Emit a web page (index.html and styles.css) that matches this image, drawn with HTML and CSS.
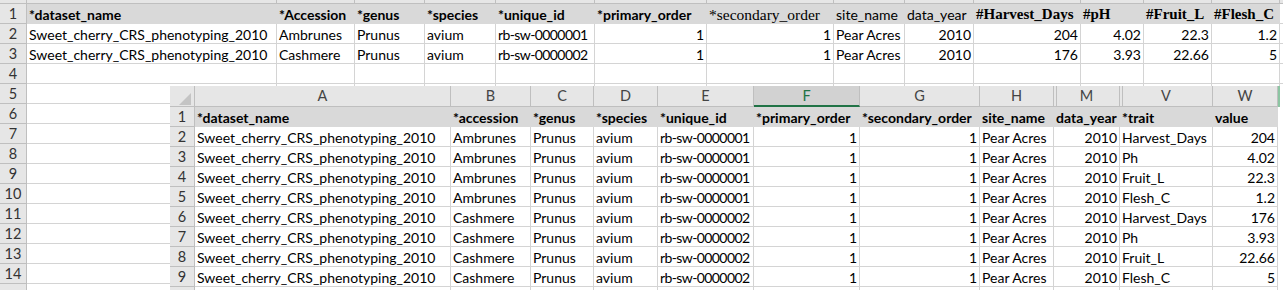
FILE: index.html
```html
<!DOCTYPE html>
<html>
<head>
<meta charset="utf-8">
<link rel="stylesheet" href="styles.css">
</head>
<body>
<div class="screen">
  <div class="sheet">
    <div class="grid top-grid">
      <div class="ch"></div><div class="ch"></div><div class="ch"></div><div class="ch"></div><div class="ch"></div><div class="ch"></div><div class="ch"></div><div class="ch"></div><div class="ch"></div><div class="ch"></div><div class="ch"></div><div class="ch"></div><div class="ch"></div><div class="ch"></div><div class="ch"></div>

      <div class="rh">1</div><div class="c hd">*dataset_name</div><div class="c hd">*Accession</div><div class="c hd">*genus</div><div class="c hd">*species</div><div class="c hd">*unique_id</div><div class="c hd">*primary_order</div><div class="c hd serif-reg">*secondary_order</div><div class="c hd reg">site_name</div><div class="c hd reg">data_year</div><div class="c hd serif">#Harvest_Days</div><div class="c hd serif">#pH</div><div class="c hd serif">#Fruit_L</div><div class="c hd serif">#Flesh_C</div><div class="c"></div>

      <div class="rh">2</div><div class="c">Sweet_cherry_CRS_phenotyping_2010</div><div class="c">Ambrunes</div><div class="c">Prunus</div><div class="c">avium</div><div class="c id">rb-sw-0000001</div><div class="c num">1</div><div class="c num">1</div><div class="c">Pear Acres</div><div class="c num">2010</div><div class="c num">204</div><div class="c num">4.02</div><div class="c num">22.3</div><div class="c num">1.2</div><div class="c"></div>

      <div class="rh">3</div><div class="c">Sweet_cherry_CRS_phenotyping_2010</div><div class="c">Cashmere</div><div class="c">Prunus</div><div class="c">avium</div><div class="c id">rb-sw-0000002</div><div class="c num">1</div><div class="c num">1</div><div class="c">Pear Acres</div><div class="c num">2010</div><div class="c num">176</div><div class="c num">3.93</div><div class="c num">22.66</div><div class="c num">5</div><div class="c"></div>

      <div class="rh">4</div><div class="c"></div><div class="c"></div><div class="c"></div><div class="c"></div><div class="c"></div><div class="c"></div><div class="c"></div><div class="c"></div><div class="c"></div><div class="c"></div><div class="c"></div><div class="c"></div><div class="c"></div><div class="c"></div>
      <div class="rh">5</div><div class="c"></div><div class="c"></div><div class="c"></div><div class="c"></div><div class="c"></div><div class="c"></div><div class="c"></div><div class="c"></div><div class="c"></div><div class="c"></div><div class="c"></div><div class="c"></div><div class="c"></div><div class="c"></div>
      <div class="rh">6</div><div class="c"></div><div class="c"></div><div class="c"></div><div class="c"></div><div class="c"></div><div class="c"></div><div class="c"></div><div class="c"></div><div class="c"></div><div class="c"></div><div class="c"></div><div class="c"></div><div class="c"></div><div class="c"></div>
      <div class="rh">7</div><div class="c"></div><div class="c"></div><div class="c"></div><div class="c"></div><div class="c"></div><div class="c"></div><div class="c"></div><div class="c"></div><div class="c"></div><div class="c"></div><div class="c"></div><div class="c"></div><div class="c"></div><div class="c"></div>
      <div class="rh">8</div><div class="c"></div><div class="c"></div><div class="c"></div><div class="c"></div><div class="c"></div><div class="c"></div><div class="c"></div><div class="c"></div><div class="c"></div><div class="c"></div><div class="c"></div><div class="c"></div><div class="c"></div><div class="c"></div>
      <div class="rh">9</div><div class="c"></div><div class="c"></div><div class="c"></div><div class="c"></div><div class="c"></div><div class="c"></div><div class="c"></div><div class="c"></div><div class="c"></div><div class="c"></div><div class="c"></div><div class="c"></div><div class="c"></div><div class="c"></div>
      <div class="rh">10</div><div class="c"></div><div class="c"></div><div class="c"></div><div class="c"></div><div class="c"></div><div class="c"></div><div class="c"></div><div class="c"></div><div class="c"></div><div class="c"></div><div class="c"></div><div class="c"></div><div class="c"></div><div class="c"></div>
      <div class="rh">11</div><div class="c"></div><div class="c"></div><div class="c"></div><div class="c"></div><div class="c"></div><div class="c"></div><div class="c"></div><div class="c"></div><div class="c"></div><div class="c"></div><div class="c"></div><div class="c"></div><div class="c"></div><div class="c"></div>
      <div class="rh">12</div><div class="c"></div><div class="c"></div><div class="c"></div><div class="c"></div><div class="c"></div><div class="c"></div><div class="c"></div><div class="c"></div><div class="c"></div><div class="c"></div><div class="c"></div><div class="c"></div><div class="c"></div><div class="c"></div>
      <div class="rh">13</div><div class="c"></div><div class="c"></div><div class="c"></div><div class="c"></div><div class="c"></div><div class="c"></div><div class="c"></div><div class="c"></div><div class="c"></div><div class="c"></div><div class="c"></div><div class="c"></div><div class="c"></div><div class="c"></div>
      <div class="rh">14</div><div class="c"></div><div class="c"></div><div class="c"></div><div class="c"></div><div class="c"></div><div class="c"></div><div class="c"></div><div class="c"></div><div class="c"></div><div class="c"></div><div class="c"></div><div class="c"></div><div class="c"></div><div class="c"></div>
      <div class="rh"></div><div class="c"></div><div class="c"></div><div class="c"></div><div class="c"></div><div class="c"></div><div class="c"></div><div class="c"></div><div class="c"></div><div class="c"></div><div class="c"></div><div class="c"></div><div class="c"></div><div class="c"></div><div class="c"></div>
    </div>
  </div>

  <div class="overlay">
    <div class="grid ov-grid">
      <div class="ch corner"><svg width="24" height="20" viewBox="0 0 24 20"><polygon points="9,19 21,7 21,19" fill="#c4c4c4"/></svg></div>
      <div class="ch">A</div><div class="ch">B</div><div class="ch">C</div><div class="ch">D</div><div class="ch">E</div><div class="ch sel">F</div><div class="ch">G</div><div class="ch">H</div><div class="ch hidden-before">M</div><div class="ch hidden-before">V</div><div class="ch">W</div><div class="ch-end"></div>

      <div class="rh">1</div><div class="c hd">*dataset_name</div><div class="c hd">*accession</div><div class="c hd">*genus</div><div class="c hd">*species</div><div class="c hd">*unique_id</div><div class="c hd">*primary_order</div><div class="c hd">*secondary_order</div><div class="c hd">site_name</div><div class="c hd">data_year</div><div class="c hd">*trait</div><div class="c hd">value</div><div class="c blank"></div>

      <div class="rh">2</div><div class="c">Sweet_cherry_CRS_phenotyping_2010</div><div class="c">Ambrunes</div><div class="c">Prunus</div><div class="c">avium</div><div class="c id">rb-sw-0000001</div><div class="c num">1</div><div class="c num">1</div><div class="c">Pear Acres</div><div class="c num">2010</div><div class="c">Harvest_Days</div><div class="c num">204</div><div class="c blank"></div>
      <div class="rh">3</div><div class="c">Sweet_cherry_CRS_phenotyping_2010</div><div class="c">Ambrunes</div><div class="c">Prunus</div><div class="c">avium</div><div class="c id">rb-sw-0000001</div><div class="c num">1</div><div class="c num">1</div><div class="c">Pear Acres</div><div class="c num">2010</div><div class="c">Ph</div><div class="c num">4.02</div><div class="c blank"></div>
      <div class="rh">4</div><div class="c">Sweet_cherry_CRS_phenotyping_2010</div><div class="c">Ambrunes</div><div class="c">Prunus</div><div class="c">avium</div><div class="c id">rb-sw-0000001</div><div class="c num">1</div><div class="c num">1</div><div class="c">Pear Acres</div><div class="c num">2010</div><div class="c">Fruit_L</div><div class="c num">22.3</div><div class="c blank"></div>
      <div class="rh">5</div><div class="c">Sweet_cherry_CRS_phenotyping_2010</div><div class="c">Ambrunes</div><div class="c">Prunus</div><div class="c">avium</div><div class="c id">rb-sw-0000001</div><div class="c num">1</div><div class="c num">1</div><div class="c">Pear Acres</div><div class="c num">2010</div><div class="c">Flesh_C</div><div class="c num">1.2</div><div class="c blank"></div>
      <div class="rh">6</div><div class="c">Sweet_cherry_CRS_phenotyping_2010</div><div class="c">Cashmere</div><div class="c">Prunus</div><div class="c">avium</div><div class="c id">rb-sw-0000002</div><div class="c num">1</div><div class="c num">1</div><div class="c">Pear Acres</div><div class="c num">2010</div><div class="c">Harvest_Days</div><div class="c num">176</div><div class="c blank"></div>
      <div class="rh">7</div><div class="c">Sweet_cherry_CRS_phenotyping_2010</div><div class="c">Cashmere</div><div class="c">Prunus</div><div class="c">avium</div><div class="c id">rb-sw-0000002</div><div class="c num">1</div><div class="c num">1</div><div class="c">Pear Acres</div><div class="c num">2010</div><div class="c">Ph</div><div class="c num">3.93</div><div class="c blank"></div>
      <div class="rh">8</div><div class="c">Sweet_cherry_CRS_phenotyping_2010</div><div class="c">Cashmere</div><div class="c">Prunus</div><div class="c">avium</div><div class="c id">rb-sw-0000002</div><div class="c num">1</div><div class="c num">1</div><div class="c">Pear Acres</div><div class="c num">2010</div><div class="c">Fruit_L</div><div class="c num">22.66</div><div class="c blank"></div>
      <div class="rh">9</div><div class="c">Sweet_cherry_CRS_phenotyping_2010</div><div class="c">Cashmere</div><div class="c">Prunus</div><div class="c">avium</div><div class="c id">rb-sw-0000002</div><div class="c num">1</div><div class="c num">1</div><div class="c">Pear Acres</div><div class="c num">2010</div><div class="c">Flesh_C</div><div class="c num">5</div><div class="c blank"></div>
      <div class="rh"></div><div class="c"></div><div class="c"></div><div class="c"></div><div class="c"></div><div class="c"></div><div class="c"></div><div class="c"></div><div class="c"></div><div class="c"></div><div class="c"></div><div class="c"></div><div class="c blank"></div>
    </div>
  </div>
</div>
</body>
</html>
```

FILE: styles.css
```css
html, body {
  margin: 0;
  padding: 0;
  background: #ffffff;
}

body {
  font-family: "Lato", "Liberation Sans", sans-serif;
  font-size: 14px;
  color: #000000;
}

.screen {
  position: relative;
  width: 1283px;
  height: 290px;
  overflow: hidden;
}

.sheet {
  overflow: hidden;
  height: 290px;
}

.grid {
  display: grid;
  grid-auto-rows: 20px;
}

.top-grid {
  grid-template-columns: 27px 250px 78px 70px 71px 99px 112px 127px 71px 69px 107px 63px 68px 68px 1fr;
  margin-top: -16px;
}

.c {
  box-sizing: border-box;
  border-right: 1px solid #d4d4d4;
  border-bottom: 1px solid #d4d4d4;
  padding: 1px 2px 0;
  white-space: nowrap;
  overflow: hidden;
  line-height: 19px;
}

.num {
  text-align: right;
}

.id {
  letter-spacing: -0.6px;
}

.hd {
  background: #d9d9d9;
  border-color: #d9d9d9;
  font-weight: 700;
}

.reg {
  font-weight: 400;
}

.serif {
  font-family: "Liberation Serif", serif;
  font-size: 15px;
  font-weight: 700;
}

.serif-reg {
  font-family: "Liberation Serif", serif;
  font-size: 15.5px;
  font-weight: 400;
}

.rh,
.ch {
  box-sizing: border-box;
  background: #e6e6e6;
  border-right: 1px solid #bfbfbf;
  border-bottom: 1px solid #bfbfbf;
  text-align: center;
  color: #444444;
  font-size: 14.5px;
  line-height: 20px;
  white-space: nowrap;
  overflow: hidden;
}

.rh {
  color: #333333;
}

.overlay {
  position: absolute;
  left: 170px;
  top: 86px;
  right: 0;
  bottom: 0;
  background: #ffffff;
  overflow: hidden;
}

.ov-grid {
  grid-template-columns: 25px 256px 80px 63px 64px 96px 106px 120px 74px 66px 93px 65px 1fr;
  grid-template-rows: 21px;
}

.corner {
  display: flex;
  padding: 0;
}

.corner svg {
  display: block;
}

.sel {
  background: #d2d2d2;
  color: #217346;
  border-bottom: 2px solid #217346;
}

.hidden-before {
  box-shadow: inset 2px 0 0 #e6e6e6, inset 3px 0 0 #bfbfbf;
}

.ch-end {
  box-sizing: border-box;
  border-left: 2px solid #8cc5a2;
  background: #ffffff;
}

.blank {
  border-right: none;
  border-bottom: none;
}
```
